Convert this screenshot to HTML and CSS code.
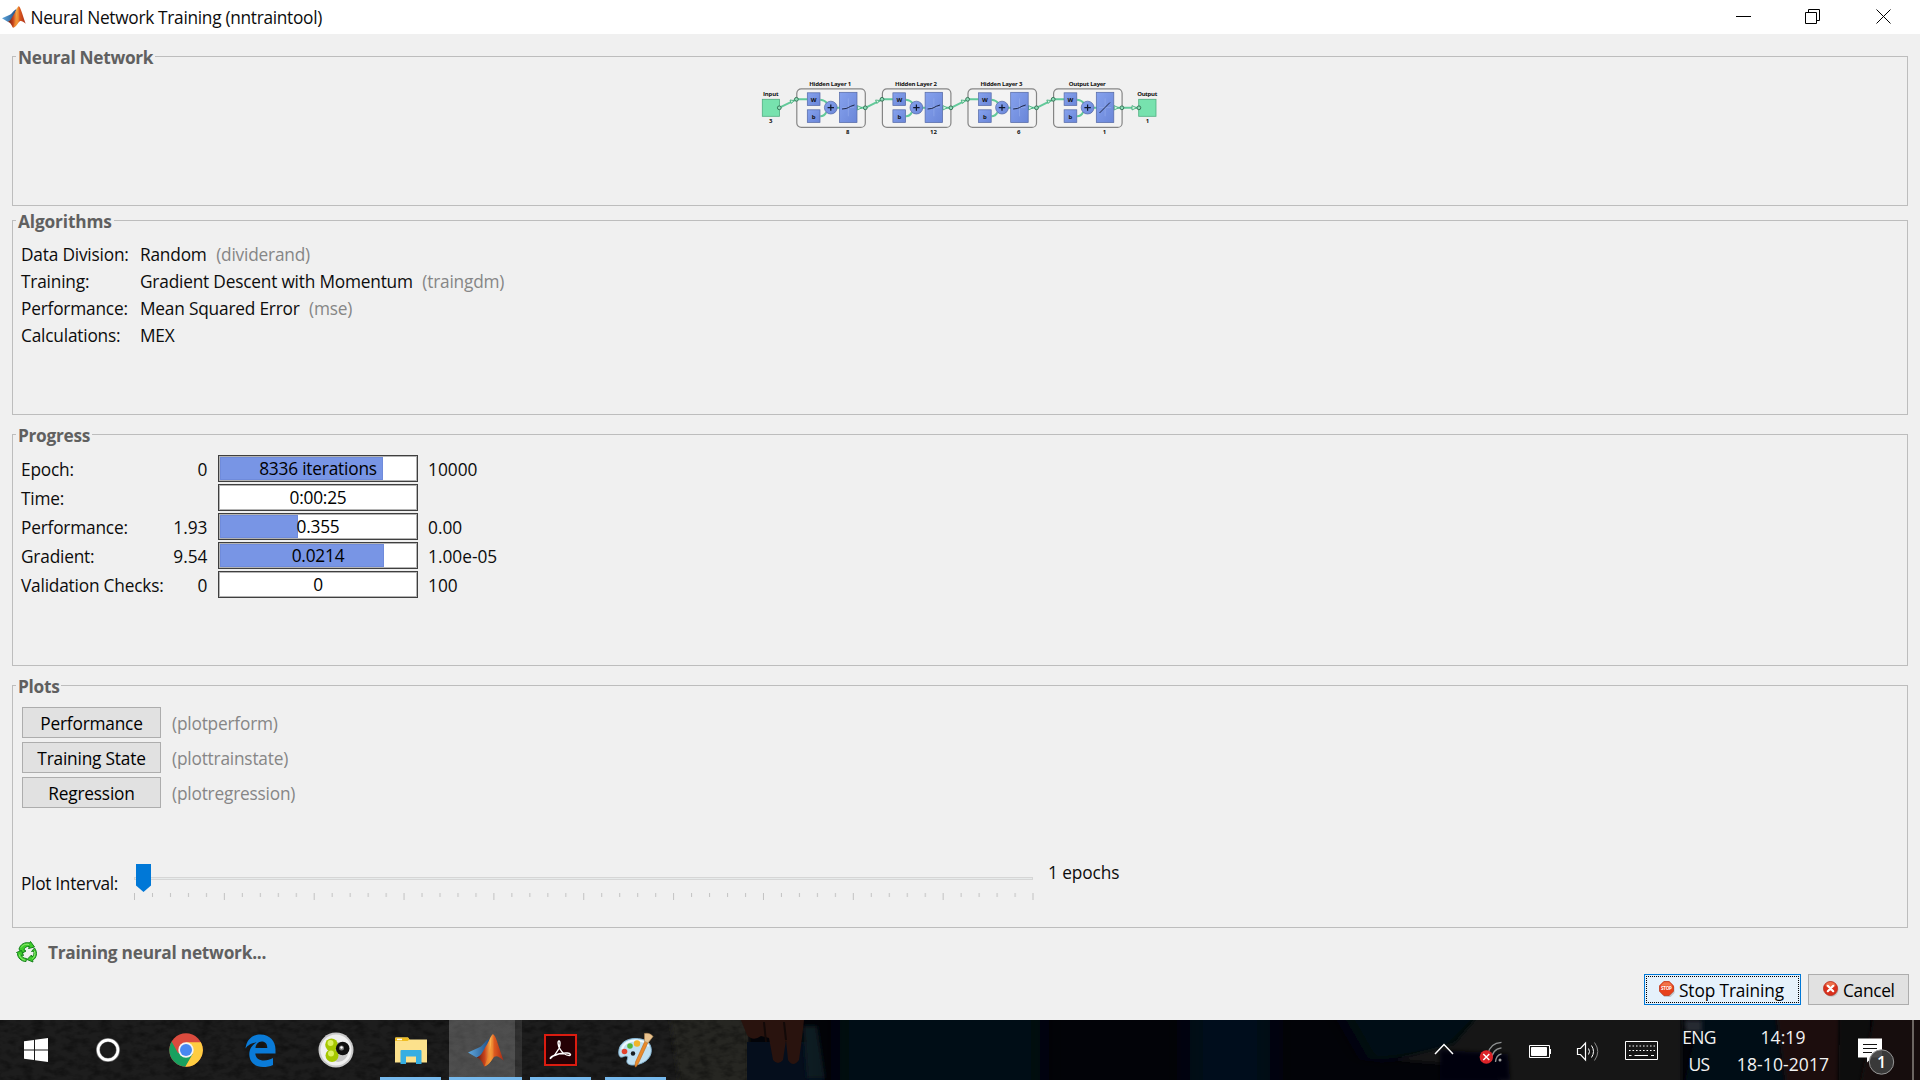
FILE: index.html
```html
<!DOCTYPE html>
<html lang="en">
<head>
<meta charset="utf-8">
<title>Neural Network Training (nntraintool)</title>
<link rel="stylesheet" href="styles.css">
</head>
<body>
<svg class="defs" aria-hidden="true">
  <defs>
    <linearGradient id="mlBlue" x1="0" y1="0" x2="1" y2="0"><stop offset="0" stop-color="#5fa8de"/><stop offset="1" stop-color="#1f4e86"/></linearGradient>
    <linearGradient id="mlRed" x1="0" y1="0" x2="1" y2="0"><stop offset="0" stop-color="#5a1a14"/><stop offset=".3" stop-color="#c8421a"/><stop offset=".52" stop-color="#f9b04e"/><stop offset=".66" stop-color="#dd5a1e"/><stop offset="1" stop-color="#a82b18"/></linearGradient>
    <linearGradient id="node" x1="0" y1="0" x2="1" y2="1"><stop offset="0" stop-color="#86a2ee"/><stop offset="1" stop-color="#6a86d8"/></linearGradient>
    <symbol id="matlab" viewBox="0 0 36 33">
      <path d="M0 18.5 11 13.5C14 12.500 15.500 9.500 18 7c1.500-1.300 2.500-.5 4-3.500L17 20l-8.500 3.500z" fill="url(#mlBlue)"/>
      <path d="M8.500 23.500C14 22 15 16 19 10.500 21.500 6 23 1.500 24.800.3c3 .4 4.700 9.500 10.700 26.200-5-4.200-8-6-11-1.500-2 3-4.500 6.500-8 7.500-1.800-2.500-3-8-8-9z" fill="url(#mlRed)"/>
      <path d="M24.800.3c-1.600 9-2.200 17-8.300 32.200 3.500-1 6-4.500 8-7.500z" fill="#f08a2c" opacity=".65"/>
    </symbol>
    <symbol id="layer" viewBox="0 0 90 40" overflow="visible">
      <rect x=".5" y=".5" width="68.500" height="38.600" rx="4.500" fill="#f3f3f3" stroke="#858585" stroke-width="1.200"/>
      <g fill="none" stroke="#62c99a" stroke-width="2">
        <path d="M0 11h11M24 11.500q5 .5 7 4M24 28q4 0 6-4M40 19.500h4M60 19.500h9"/>
      </g>
      <path d="M61 17.300l4.500 2.200-4.500 2.200z" fill="#d6f5e4" stroke="#3aa874" stroke-width=".8"/>
      <g fill="url(#node)" stroke="#5468a4" stroke-width=".7">
        <rect x="11" y="4.500" width="12.700" height="12.700"/>
        <rect x="11" y="21.500" width="12.700" height="12.700"/>
        <rect x="43.200" y="4" width="17.500" height="30.300"/>
        <circle cx="34.500" cy="19.300" r="6.400"/>
      </g>
      <path d="M31.300 19.300h6.400M34.500 16.100v6.400" stroke="#10182f" stroke-width="1.200"/>
      <path d="M46 19.300h12M52 10v18" stroke="#9db2ee" stroke-width=".5"/>
      <text x="17.400" y="13.800">W</text><text x="17.400" y="30.700">b</text>
    </symbol>
  </defs>
</svg>

<main class="window">
  <header class="titlebar">
    <svg class="app-icon" width="24" height="24"><use href="#matlab" width="24" height="24"/></svg>
    <h1>Neural Network Training (nntraintool)</h1>
    <svg class="controls" width="190" height="34" fill="none" stroke="#000" stroke-width="1">
      <path d="M6 16.500h15M75.500 12.500h11v11h-11zM78.500 12.500v-3h11v11h-3M146.500 9.500l14 14M160.500 9.500l-14 14"/>
    </svg>
  </header>

  <div class="content">
    <section class="panel panel-network">
      <h2>Neural Network</h2>
      <svg class="diagram" width="420" height="75">
        <g fill="none" stroke="#62c99a" stroke-width="2">
          <path d="M29 37.800L46.500 29.300M115.300 37.800l17-8.500M200.900 37.800l17-8.500M286.500 37.800l17-8.500M372 37.800h17"/>
        </g>
        <rect x="12.300" y="29.300" width="17.300" height="17" fill="#77e2ae" stroke="#4fae80" stroke-width=".8"/>
        <rect x="388.700" y="29.300" width="17.300" height="17" fill="#77e2ae" stroke="#4fae80" stroke-width=".8"/>
        <use href="#layer" x="46.300" y="18.300" width="90" height="40"/>
        <use href="#layer" x="131.900" y="18.300" width="90" height="40"/>
        <use href="#layer" x="217.500" y="18.300" width="90" height="40"/>
        <use href="#layer" x="303.100" y="18.300" width="90" height="40"/>
        <g fill="none" stroke="#141c38" stroke-width=".9">
          <path d="M92 39q5-.3 6.500-1.500t6-2.500M177.600 39q5-.3 6.500-1.500t6-2.500M263.200 39q5-.3 6.500-1.500t6-2.500M349.500 43l10.500-10.500"/>
        </g>
        <g fill="#d6f5e4" stroke="#3aa874" stroke-width=".8">
          <path d="M40 30l4 .5-2.600 3zM125.600 30l4 .5-2.600 3zM211.200 30l4 .5-2.600 3zM296.800 30l4 .5-2.600 3zM382 35.600l4.500 2.200-4.500 2.200z"/>
        </g>
        <g fill="#8fdcb8" stroke="#2f6e50" stroke-width=".9">
          <circle cx="29.300" cy="37.800" r="1.900"/><circle cx="46.400" cy="29.300" r="1.900"/>
          <circle cx="115.300" cy="37.800" r="1.900"/><circle cx="132" cy="29.300" r="1.900"/>
          <circle cx="200.900" cy="37.800" r="1.900"/><circle cx="217.600" cy="29.300" r="1.900"/>
          <circle cx="286.500" cy="37.800" r="1.900"/><circle cx="303.200" cy="29.300" r="1.900"/>
          <circle cx="371.900" cy="37.800" r="1.900"/><circle cx="388.900" cy="37.800" r="1.900"/>
        </g>
        <text x="20.800" y="26.300" textLength="15.500">Input</text><text x="20.800" y="53">3</text>
        <text x="80.200" y="16" textLength="42">Hidden Layer 1</text><text x="97.600" y="64">8</text>
        <text x="166" y="16" textLength="42">Hidden Layer 2</text><text x="183.500" y="64">12</text>
        <text x="251.400" y="16" textLength="42">Hidden Layer 3</text><text x="268.800" y="64">6</text>
        <text x="337.300" y="16" textLength="37">Output Layer</text><text x="354.500" y="64">1</text>
        <text x="397.300" y="26.300" textLength="20">Output</text><text x="397.500" y="53">1</text>
      </svg>
    </section>

    <section class="panel panel-algorithms">
      <h2>Algorithms</h2>
      <dl class="facts">
        <dt>Data Division:</dt><dd>Random <span class="hint">(dividerand)</span></dd>
        <dt>Training:</dt><dd>Gradient Descent with Momentum <span class="hint">(traingdm)</span></dd>
        <dt>Performance:</dt><dd>Mean Squared Error <span class="hint">(mse)</span></dd>
        <dt>Calculations:</dt><dd>MEX</dd>
      </dl>
    </section>

    <section class="panel panel-progress">
      <h2>Progress</h2>
      <div class="meters">
        <span>Epoch:</span><span class="min">0</span><div class="meter"><i style="width:82.4%"></i><b>8336 iterations</b></div><span class="max">10000</span>
        <span>Time:</span><span class="min"></span><div class="meter"><b>0:00:25</b></div><span class="max"></span>
        <span>Performance:</span><span class="min">1.93</span><div class="meter"><i style="width:39.4%"></i><b>0.355</b></div><span class="max">0.00</span>
        <span>Gradient:</span><span class="min">9.54</span><div class="meter"><i style="width:82.9%"></i><b>0.0214</b></div><span class="max">1.00e-05</span>
        <span>Validation Checks:</span><span class="min">0</span><div class="meter"><b>0</b></div><span class="max">100</span>
      </div>
    </section>

    <section class="panel panel-plots">
      <h2>Plots</h2>
      <div class="plots">
        <button>Performance</button><span class="hint">(plotperform)</span>
        <button>Training State</button><span class="hint">(plottrainstate)</span>
        <button>Regression</button><span class="hint">(plotregression)</span>
      </div>
      <div class="interval">
        <span class="interval-label">Plot Interval:</span>
        <svg class="slider" width="918" height="42">
          <defs>
            <pattern id="ticks" x="4" y="0" width="89.850" height="8" patternUnits="userSpaceOnUse">
              <path d="M.5 0v7M18.500 0v4M36.500 0v4M54.500 0v4M72.500 0v4" stroke="#c2c2c2"/>
            </pattern>
          </defs>
          <rect x="4.500" y="17.500" width="898" height="2" fill="#e7eaea" stroke="#d6d6d6"/>
          <g transform="translate(0 33)"><rect x="4" width="900" height="8" fill="url(#ticks)"/></g>
          <path d="M6 4h15v21.500l-7.500 6.500L6 25.500z" fill="#0078d7"/>
        </svg>
        <span class="interval-value">1 epochs</span>
      </div>
    </section>

    <div class="status">
      <svg width="22" height="22" viewBox="0 0 22 22">
        <g fill="#3ecb2c" stroke="#14801a" stroke-width="1" stroke-linejoin="round">
          <path d="M3 8C4.500 3 9 .8 13.500 2l1-1.500L18.500 6l-6 1.500 1-2C10.500 5 8.500 6.500 8 9L10 10 5.500 12.500z"/>
          <path d="M18.500 7C22 11.500 20.500 17 16.500 19.500l.5 1.500-6-2.500 4.500-4.500.5 2c2-1.500 2.500-4 1.500-6L15.500 10.500z"/>
          <path d="M10 20.500C5 20.500 1.500 16.500 1.500 12.500L.5 11.500 5.500 9.500 7.500 14.500 5.500 14c.5 2 2.500 3.500 5 3.500z"/>
        </g>
        <path d="M5 6.500C7 3.500 10 2.800 13 3.500M18.500 10c1 3.500 0 6-2 7.800M3.300 13.500c.5 3 3 5.300 6 5.700" fill="none" stroke="#a2f27e" stroke-width=".9"/>
      </svg>
      <strong>Training neural network...</strong>
    </div>

    <footer class="actions">
      <button class="stop">
        <svg width="16" height="16" viewBox="0 0 16 16">
          <path d="M5.500 2h6l4 4v6l-4 4h-6l-4-4V6z" fill="#9b9b9b" opacity=".5"/>
          <path d="M4.800.5h5.400l4.300 4.300v5.400l-4.300 4.300H4.800L.5 10.200V4.800z" fill="#e8411c" stroke="#c23a1c" stroke-width=".8"/>
          <path d="M5 1.300h5l3.500 3.500H1.500z" fill="#f58b60" opacity=".7"/>
          <text class="stop-word" x="7.500" y="9.400" textLength="11">STOP</text>
        </svg>Stop Training</button>
      <button class="cancel">
        <svg width="16" height="16" viewBox="0 0 16 16">
          <circle cx="8.500" cy="8.700" r="7" fill="#9b9b9b" opacity=".5"/>
          <circle cx="7.500" cy="7.500" r="7" fill="#d9301c" stroke="#bb2b1b" stroke-width=".8"/>
          <ellipse cx="7.500" cy="4" rx="5" ry="3" fill="#f58b60" opacity=".7"/>
          <path d="M4.800 4.800l5.400 5.400M10.200 4.800l-5.400 5.400" stroke="#fff" stroke-width="2.200" stroke-linecap="round"/>
        </svg>Cancel</button>
    </footer>
  </div>
</main>

<nav class="taskbar">
  <svg class="wallpaper" width="1920" height="60">
    <defs>
      <filter id="soft" filterUnits="userSpaceOnUse" x="0" y="-20" width="1920" height="100"><feGaussianBlur stdDeviation="2"/></filter>
      <filter id="wide" filterUnits="userSpaceOnUse" x="0" y="-20" width="1920" height="100"><feGaussianBlur stdDeviation="14 5"/></filter>
      <filter id="grain" x="0" y="0" width="100%" height="100%"><feTurbulence type="fractalNoise" baseFrequency=".09 .16" numOctaves="3" seed="4"/><feColorMatrix values="0 0 0 0 0  0 0 0 0 0  0 0 0 0 0  1.500 0 0 0 -.6"/></filter>
    </defs>
    <rect width="1920" height="60" fill="#020308"/>
    <rect width="748" height="60" fill="#1d1d1d"/>
    <path d="M670 -5h78v70h-68z" fill="#262523" filter="url(#soft)"/>
    <rect width="748" height="60" filter="url(#grain)" opacity=".6"/>
    <path d="M747 22h70l8 38h-78z" fill="#050e1c"/>
    <path d="M803 6h14l8 52h-18z" fill="#101a20" filter="url(#soft)"/>
    <path d="M741 0h63l-2 18-3 22q-6 8-11 0l-2-20-3 20q-5 6-10 0l-4-22-8-2q-8 6-14-1z" fill="#29130e"/>
    <path d="M764 2l2 20M784 2l2 18" stroke="#120908" stroke-width="2"/>
    <rect x="840" y="-10" width="200" height="80" fill="#020713" filter="url(#wide)"/>
    <rect x="1190" y="-10" width="80" height="80" fill="#03101b" filter="url(#wide)"/>
    <path d="M1340 -10h140v10l-30 30-80 12z" fill="#030817" filter="url(#wide)"/>
    <path d="M1480 -6h202v72h-180l-8-18-100-8 60-16z" fill="#161716" filter="url(#soft)"/>
    <path d="M1440 30l68 4 2 26h-70z" fill="#03060d" filter="url(#soft)"/>
    <path d="M1702 -6h80l10 72h-108l6-30z" fill="#030914" filter="url(#soft)"/>
    <path d="M1684 0h18v12h-16z" fill="#272c30" filter="url(#soft)"/>
    <path d="M1776 -6h64v72h-54z" fill="#1c0f0c" filter="url(#soft)"/>
    <path d="M1840 -6h30v72h-32z" fill="#080808" filter="url(#soft)"/>
    <path d="M1874 -6h50v72h-64z" fill="#180f0d" filter="url(#soft)"/>
  </svg>

  <div class="apps">
    <span class="slot edge-slot"><svg width="24" height="24" fill="#fff"><path d="M0 3.300l10-1.400v9.600H0zM11 1.800L24 0v11.500H11zM0 12.500h10v9.600L0 20.700zM11 12.500h13V24l-13-1.800z"/></svg></span>
    <span class="slot edge-slot"><svg width="24" height="24"><circle cx="12" cy="12" r="10" fill="none" stroke="#777" stroke-width="4"/><circle cx="12" cy="12" r="9.900" fill="none" stroke="#fff" stroke-width="2.600"/></svg></span>
    <span class="slot first-app"><svg width="34" height="34" viewBox="0 0 34 34">
      <circle cx="17" cy="17" r="16.700" fill="#da4b3e"/>
      <path d="M2.600 8.500A16.700 16.700 0 0 0 16.500 33.700L24 21 17 17 9 20z" fill="#18a05f"/>
      <path d="M17 9.300h14.900A16.700 16.700 0 0 1 16.300 33.700L23.700 21z" fill="#ffcd42"/>
      <circle cx="17" cy="17" r="7.700" fill="#f3f3f3"/><circle cx="17" cy="17" r="6" fill="#4688f1"/>
    </svg></span>
    <span class="slot"><svg width="31" height="33" viewBox="0 0 31 33"><path d="M.5 14.500C1.500 6 7 .5 15.500.5 25 .5 30.500 7.500 30.500 15.500v4H10.300c.3 4.500 3.800 7 8.700 7 3.500 0 6.200-.9 9-2.500v7c-3 1.500-6.500 2-10 2C9.500 33 4.300 27.500 4.300 20.300 4.300 15 7 11 11.500 8.500 6.500 8.700 2.500 11.500.5 14.500zM10.500 14h11.800c0-4.200-2-6.500-5.600-6.500s-6 3-6.200 6.500z" fill="#0a7bd8"/></svg></span>
    <span class="slot"><svg width="36" height="36" viewBox="0 0 36 36">
      <circle cx="18" cy="18" r="17.500" fill="#c9c9c9"/><circle cx="18" cy="18" r="15.500" fill="#f0f0f0"/><circle cx="20" cy="20" r="10" fill="#aaa" opacity=".6"/>
      <circle cx="13.500" cy="12.700" r="6.300" fill="#a6c800"/><circle cx="14" cy="23.500" r="6.500" fill="#a6c800"/><circle cx="24.700" cy="16.500" r="6.800" fill="#101010"/>
      <circle cx="12.500" cy="11" r="3" fill="#dcf060"/><circle cx="13" cy="21.500" r="3" fill="#dcf060"/><circle cx="23.500" cy="16" r="2.500" fill="#777"/><circle cx="23.500" cy="15.500" r="1.200" fill="#fff"/>
    </svg></span>
    <span class="slot running"><svg width="32" height="27" viewBox="0 0 32 27"><path d="M0 1.500Q0 .5 1 .5h12l1.500 2H32v23H0z" fill="#fce18c"/><path d="M0 4V1.500Q0 .5 1 .5h12l1.500 2-2 1.500z" fill="#f0bd22"/><path d="M2 1.700h5v1.500H2z" fill="#fff"/><path d="M5.500 27V14Q5.500 13 6.500 13h19q1 0 1 1v13h-5.500v-7.500h-10V27z" fill="#36aee2"/></svg></span>
    <span class="slot active"><svg width="36" height="33"><use href="#matlab" width="36" height="33"/></svg></span>
    <span class="slot running"><svg width="33" height="32" viewBox="0 0 33 32"><rect x="1" y="1" width="31" height="30" fill="#250004" stroke="#dc1c10" stroke-width="2"/><path d="M6.500 24.500c2.500-1.800 6-5 8.500-10 1.200-3 1.500-7.500 0-7.500s-1.200 4.500 1 8c2 3.500 6 6.300 9.300 6.500 2 0 1.500-2.300-1.800-2.500-5-.3-10.500 1-14.500 3-2 1-3.300 2-2.500 2.500z" fill="none" stroke="#fff" stroke-width="1.400"/></svg></span>
    <span class="slot running"><svg width="36" height="36" viewBox="0 0 36 36">
      <path d="M17 6.500C8 6.500.8 12 .8 20c0 6 2.500 5.500 5 4.500s5-.5 3.500 3c-1.200 3 .5 5.500 5.500 5.500 9 0 18.500-5.500 18.500-14.500S26 6.500 17 6.500z" fill="#bfe0f2" stroke="#89b8d6"/>
      <path d="M4 17c2-6 8-8.500 14-8.500s11 2 12.500 6" fill="none" stroke="#eef9ff" stroke-width="2"/>
      <circle cx="15" cy="21.500" r="2.200" fill="#171c20"/><circle cx="6.500" cy="19.500" r="2.800" fill="#e2432d"/><circle cx="12" cy="14" r="2.800" fill="#52b53b"/><circle cx="19" cy="11.500" r="3.200" fill="#f2b52a"/>
      <path d="M27 9l3 1.500L20.500 31q-2 4-3 4t0-5z" fill="#e98b2c" stroke="#b9631a" stroke-width=".6"/>
      <path d="M26.500 1.500Q32 .5 35 4.500L30 11l-3.500-1.800z" fill="#e8c28e" stroke="#b28a56" stroke-width=".6"/>
    </svg></span>
  </div>

  <div class="tray">
    <svg width="252" height="60" fill="none" stroke="#fff">
      <path d="M15 34l9-9.500 9 9.500" stroke-width="1.500"/>
      <g stroke="#8f9293" stroke-width="1.300"><path d="M68 34q2-11 13.500-11.700M71 41q1-12 10.500-13.200M75.500 42q.5-7 6-8.200"/></g>
      <circle cx="80" cy="40" r="1.500" fill="#a5a5a5" stroke="none"/>
      <circle cx="66.300" cy="37" r="6.700" fill="#dc2328" stroke="none"/><path d="M63.300 34l6 6M69.300 34l-6 6" stroke-width="1.400"/>
      <path d="M109.500 25.500h20v12h-20zM130.500 29v5"/><path d="M111.500 27.500h15v8h-15z" fill="#fff"/>
      <path d="M157.500 28.500h3l5-5.500v17l-5-5.500h-3z" stroke-width="1.200"/><path d="M168.500 28.500q2 3 0 6M171.500 25.500q4 6 0 12"/><path d="M174.500 22.500q6.500 9 0 18" stroke="#888"/>
      <path d="M205.500 21.500h32v18h-32z"/><path d="M209 26h26M209 30.500h26" stroke-dasharray="1.600 1.900"/><path d="M209 35.500h2.500M214.500 35.500h13.500M231 35.500h3"/>
    </svg>
    <div class="lang"><span>ENG</span><span>US</span></div>
    <div class="clock"><span>14:19</span><span>18-10-2017</span></div>
    <svg width="72" height="60">
      <path d="M18 18.500h24v19H32l-5 5v-5h-9z" fill="#fff"/><path d="M23 24.500h14M23 28.500h14M23 32.500h9" stroke="#111"/>
      <circle cx="41.500" cy="42" r="12.200" fill="#3d3d3d" fill-opacity=".92" stroke="#969696"/>
      <text class="badge" x="41.500" y="47.500">1</text>
    </svg>
    <i class="show-desktop"></i>
  </div>
</nav>
</body>
</html>
```
FILE: styles.css
```css
* { box-sizing: border-box; }

body {
  margin: 0;
  width: 1920px;
  height: 1080px;
  overflow: hidden;
  background: #f0f0f0;
  color: #0c0c0c;
  font: 17.3px/24px "Open Sans", "Noto Sans", sans-serif;
  letter-spacing: -0.2px;
}

svg { display: block; flex: none; }
.defs { position: absolute; width: 0; height: 0; }

.window { height: 1020px; display: flex; flex-direction: column; }

.titlebar {
  height: 34px;
  display: flex;
  align-items: center;
  padding-left: 2px;
  background: #fff;
}
.titlebar h1 {
  flex: 1;
  margin: 0 0 0 4.500px;
  padding-top: 2px;
  font-size: 17.3px;
  font-weight: 400;
  letter-spacing: -0.3px;
}

.content {
  flex: 1;
  display: flex;
  flex-direction: column;
  padding: 22px 12px 15px;
}

.panel { flex: none; border: 1px solid #bdbdbd; }
.panel h2 {
  width: fit-content;
  margin: -12px 0 0 3px;
  padding: 0 2px;
  background: #f0f0f0;
  color: #606060;
  font-size: 17.3px;
  line-height: 26px;
  letter-spacing: -0.3px;
}
.panel-network { height: 150px; margin-bottom: 14px; }
.panel-algorithms { height: 195px; margin-bottom: 19px; }
.panel-progress { height: 232px; margin-bottom: 19px; }
.panel-plots { height: 243px; }
.panel-algorithms h2 { letter-spacing: -0.15px; }

.hint { color: #868686; }

.diagram { margin: -1px auto 0; }
.diagram text, .defs text {
  fill: #111;
  stroke: none;
  font: 700 6px "Open Sans", sans-serif;
  letter-spacing: 0;
  text-anchor: middle;
}

.facts {
  display: grid;
  grid-template-columns: 119px 1fr;
  grid-auto-rows: 27px;
  margin: 6px 0 0 8px;
  line-height: 27px;
}
.facts dd { display: flex; gap: 9.500px; margin: 0; }

.meters {
  display: grid;
  grid-template-columns: 147px 49px 200px 1fr;
  grid-auto-rows: 29px;
  align-items: center;
  margin: 5px 0 0 8px;
}
.meters > span { padding-top: 2px; }
.meters .min { padding-right: 9.500px; text-align: right; letter-spacing: 0; }
.meters .max { padding-left: 11px; letter-spacing: 0; }
.meter {
  position: relative;
  height: 27px;
  border: 1px solid #3f3f3f;
  outline: 1px solid #b4b4b4;
  outline-offset: -2px;
  margin-left: 1px;
  margin-right: -1px;
  background: #fff;
  color: #000;
  text-align: center;
}
.meter i {
  position: absolute;
  inset: 1px auto 1px 1px;
  background: #7895e5;
  box-shadow: inset 0 0 0 1px #6f8bdb;
}
.meter b {
  position: relative;
  display: block;
  line-height: 25px;
  font-weight: 400;
}

button {
  height: 31px;
  padding: 3px 0 0;
  border: 1px solid #adadad;
  background: #e1e1e1;
  color: #000;
  font: inherit;
  letter-spacing: inherit;
}

.plots {
  display: grid;
  grid-template-columns: 139px 1fr;
  grid-auto-rows: 31px;
  gap: 4px 11px;
  align-items: center;
  margin: 7px 0 0 9px;
}
.plots .hint { padding-top: 3px; }

.interval { display: flex; height: 42px; margin: 52px 0 0 8px; }
.interval-label { width: 109px; padding-top: 12px; letter-spacing: -0.3px; }
.interval-value { padding-top: 1px; letter-spacing: -0.1px; }

.status {
  display: flex;
  align-items: center;
  gap: 10px;
  height: 24px;
  margin: 12px 0 10px 4px;
  color: #606060;
}
.status strong { padding-top: 2px; letter-spacing: -0.25px; }

.actions { display: flex; justify-content: flex-end; gap: 7px; margin-right: -1px; }
.actions button { display: flex; align-items: center; gap: 4px; padding-left: 14px; }
.actions svg { margin-top: -5px; }
.actions .stop {
  width: 157px;
  border: 1px solid #0078d7;
  outline: 1px dotted #000;
  outline-offset: -3px;
  background: #e5f1fb;
  letter-spacing: -0.12px;
}
.cancel { width: 101px; letter-spacing: -0.3px; }
.stop-word {
  fill: #fff;
  font: 700 4.6px "Open Sans", sans-serif;
  letter-spacing: 0;
  text-anchor: middle;
}

.taskbar {
  position: relative;
  height: 60px;
  display: flex;
  justify-content: space-between;
  overflow: hidden;
  background: #0a0a0c;
}
.wallpaper { position: absolute; inset: 0; }

.apps { position: relative; display: flex; }
.slot {
  width: 75px;
  height: 60px;
  display: flex;
  align-items: center;
  justify-content: center;
}
.edge-slot { width: 72px; }
.first-app { margin-left: 4px; }
.running {
  background: linear-gradient(#76b9ed, #76b9ed) 7px 100% / 61px 3px no-repeat;
}
.active {
  background:
    linear-gradient(#76b9ed, #76b9ed) 1px 100% / 73px 3px no-repeat,
    linear-gradient(90deg, transparent 1px, #ffffff38 1px 67px, #ffffff18 67px 74px, transparent 74px);
}

.tray {
  position: relative;
  display: flex;
  color: #f2f2f2;
  font-size: 17.5px;
}
.lang, .clock {
  display: flex;
  flex-direction: column;
  align-items: center;
  padding-top: 4px;
  line-height: 27px;
}
.lang { width: 54px; letter-spacing: -0.7px; }
.clock { width: 114px; letter-spacing: 0.1px; }
.badge {
  fill: #fff;
  font: 600 16px "Open Sans", sans-serif;
  text-anchor: middle;
}
.show-desktop { width: 8px; border-left: 2px solid #6b6561; }
```
